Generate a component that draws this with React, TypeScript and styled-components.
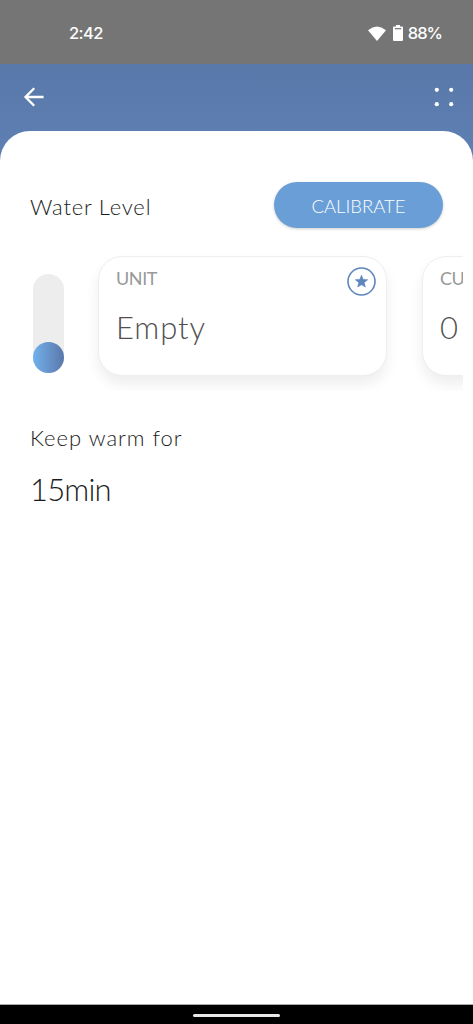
import React from 'react';
import styled, { createGlobalStyle } from 'styled-components';

const GlobalStyle = createGlobalStyle`
  * { box-sizing: border-box; }
  body { margin: 0; background: #fff; }
`;

const Screen = styled.div`
  width: 473px;
  height: 1024px;
  display: flex;
  flex-direction: column;
  overflow: hidden;
  background: linear-gradient(#5978aa 64px, #5f80b3 162px);
  font-family: Lato, 'Open Sans', sans-serif;
`;

const StatusBar = styled.header`
  height: 64px;
  flex: none;
  display: flex;
  align-items: center;
  padding: 3px 31px 0 69px;
  background: #757575;
  color: #fff;
`;

const StatusIcons = styled.div`
  display: flex;
  align-items: center;
  margin-left: auto;
`;

const Label = styled.span<{ $size: number; $weight?: number; $spacing?: number; $color?: string; $font?: string }>`
  display: block;
  white-space: nowrap;
  line-height: ${p => Math.round(p.$size * 1.25)}px;
  font-size: ${p => p.$size}px;
  font-weight: ${p => p.$weight ?? 400};
  letter-spacing: ${p => p.$spacing ?? 0}px;
  color: ${p => p.$color ?? 'inherit'};
  font-family: ${p => p.$font ?? 'inherit'};
`;

const AppBar = styled.nav`
  height: 67px;
  flex: none;
  display: flex;
  align-items: center;
  justify-content: space-between;
  padding: 0 18px 1px 23px;
`;

const Sheet = styled.main`
  flex: 1;
  min-height: 0;
  padding: 51px 10px 0 30px;
  border-radius: 30px 30px 0 0;
  background: #fff;
  color: #1c1c1c;
`;

const TitleRow = styled.div`
  display: flex;
  align-items: flex-start;
  justify-content: space-between;
  padding-right: 20px;
  height: 47px;
`;

const Title = styled.div`
  padding-top: 11px;
`;

const PillButton = styled.button`
  display: flex;
  align-items: center;
  justify-content: center;
  width: 169px;
  height: 46px;
  padding: 3px 0 0;
  border: 0;
  border-radius: 23px;
  background: #6a9ed6;
  color: #fff;
  font-family: inherit;
  box-shadow: 0 1px 3px rgba(0, 0, 0, 0.2);
`;

const LevelRow = styled.section`
  display: flex;
  height: 162px;
`;

const Gauge = styled.div`
  flex: none;
  display: flex;
  align-items: flex-end;
  width: 31px;
  height: 99px;
  margin: 45px 0 0 3px;
  border-radius: 16px;
  background: #ededed;
`;

const GaugeFill = styled.div`
  width: 31px;
  height: 31px;
  border-radius: 50%;
  background: linear-gradient(90deg, #72b1ec, #5b77aa);
`;

const CardScroller = styled.div`
  flex: 1;
  min-width: 0;
  display: flex;
  gap: 35px;
  padding: 27px 0 0 34px;
  overflow: hidden;
`;

const Card = styled.article`
  flex: none;
  display: flex;
  justify-content: space-between;
  width: 289px;
  height: 120px;
  padding: 10px 10px 0 17px;
  border: 1px solid #eee;
  border-radius: 24px;
  background: #fff;
  box-shadow: 0 8px 14px rgba(0, 0, 0, 0.07);
`;

const CardText = styled.div`
  display: flex;
  flex-direction: column;
  gap: 18px;
`;

const WarmSection = styled.section`
  display: flex;
  flex-direction: column;
  gap: 18px;
  padding-top: 33px;
`;

const SystemNav = styled.footer`
  height: 20px;
  flex: none;
  display: flex;
  align-items: center;
  justify-content: center;
  padding-top: 1px;
  border-top: 1px solid #aaa;
  background: #000;
`;

const HomeHandle = styled.div`
  width: 87px;
  height: 3px;
  border-radius: 2px;
  background: #e8e8e8;
`;

const WifiIcon = () => (
  <svg width="18" height="16" viewBox="0 0 18 16">
    <path d="M0 4.2Q9-3.2 18 4.2L9 15Z" fill="#fff" />
  </svg>
);

const BatterySvg = styled.svg`
  margin: 0 5px 1px 7px;
`;

const BatteryIcon = () => (
  <BatterySvg width="10" height="16" viewBox="0 0 10 16">
    <path d="M3 0h4v1.5h2q1 0 1 1V15q0 1-1 1H1q-1 0-1-1V2.5q0-1 1-1h2Z" fill="#fff" />
    <path d="M1.8 3.7h6.4" stroke="#757575" strokeWidth="1.2" />
  </BatterySvg>
);

const BackIcon = () => (
  <svg width="22" height="22" viewBox="0 0 22 22" fill="none" stroke="#fff" strokeWidth="2.3">
    <path d="M20.6 11H2.8M11.2 2.2L2.5 11l8.7 8.8" />
  </svg>
);

const GridDotsIcon = () => (
  <svg width="22" height="22" viewBox="0 0 22 22" fill="#fff">
    <circle cx="3.8" cy="3.8" r="2.1" />
    <circle cx="18.2" cy="3.8" r="2.1" />
    <circle cx="3.8" cy="18.2" r="2.1" />
    <circle cx="18.2" cy="18.2" r="2.1" />
  </svg>
);

const StarBadge = () => (
  <svg width="29" height="29" viewBox="0 0 29 29">
    <circle cx="14.5" cy="14.5" r="13.5" fill="none" stroke="#5e85bd" strokeWidth="1.6" />
    <path
      d="M14.5 8.2l1.7 4.2 4.5.3-3.5 2.9 1.1 4.4-3.8-2.3-3.8 2.3 1.1-4.4-3.5-2.9 4.5-.3z"
      fill="#5e85bd"
      stroke="#5e85bd"
      strokeWidth="0.6"
      strokeLinejoin="round"
    />
  </svg>
);

export default function App() {
  return (
    <Screen>
      <GlobalStyle />
      <StatusBar>
        <Label $size={16.5} $weight={500} $font="Inter, sans-serif" $spacing={-0.6}>2:42</Label>
        <StatusIcons>
          <WifiIcon />
          <BatteryIcon />
          <Label $size={16.5} $weight={500} $font="Inter, sans-serif" $spacing={-1}>88%</Label>
        </StatusIcons>
      </StatusBar>
      <AppBar>
        <BackIcon />
        <GridDotsIcon />
      </AppBar>
      <Sheet>
        <TitleRow>
          <Title>
            <Label $size={22} $spacing={0.8} $weight={300}>Water Level</Label>
          </Title>
          <PillButton>
            <Label $size={18.5} $weight={300}>CALIBRATE</Label>
          </PillButton>
        </TitleRow>
        <LevelRow>
          <Gauge>
            <GaugeFill />
          </Gauge>
          <CardScroller>
            <Card>
              <CardText>
                <Label $size={18} $spacing={-0.4} $color="#999">UNIT</Label>
                <Label $size={31} $spacing={0.9} $color="#505050" $weight={300}>Empty</Label>
              </CardText>
              <StarBadge />
            </Card>
            <Card>
              <CardText>
                <Label $size={18} $spacing={-0.4} $color="#999">CURRENT</Label>
                <Label $size={31} $color="#505050" $weight={300}>0</Label>
              </CardText>
            </Card>
          </CardScroller>
        </LevelRow>
        <WarmSection>
          <Label $size={22} $spacing={1} $weight={300}>Keep warm for</Label>
          <Label $size={31} $spacing={-0.8} $weight={300}>15min</Label>
        </WarmSection>
      </Sheet>
      <SystemNav>
        <HomeHandle />
      </SystemNav>
    </Screen>
  );
}
